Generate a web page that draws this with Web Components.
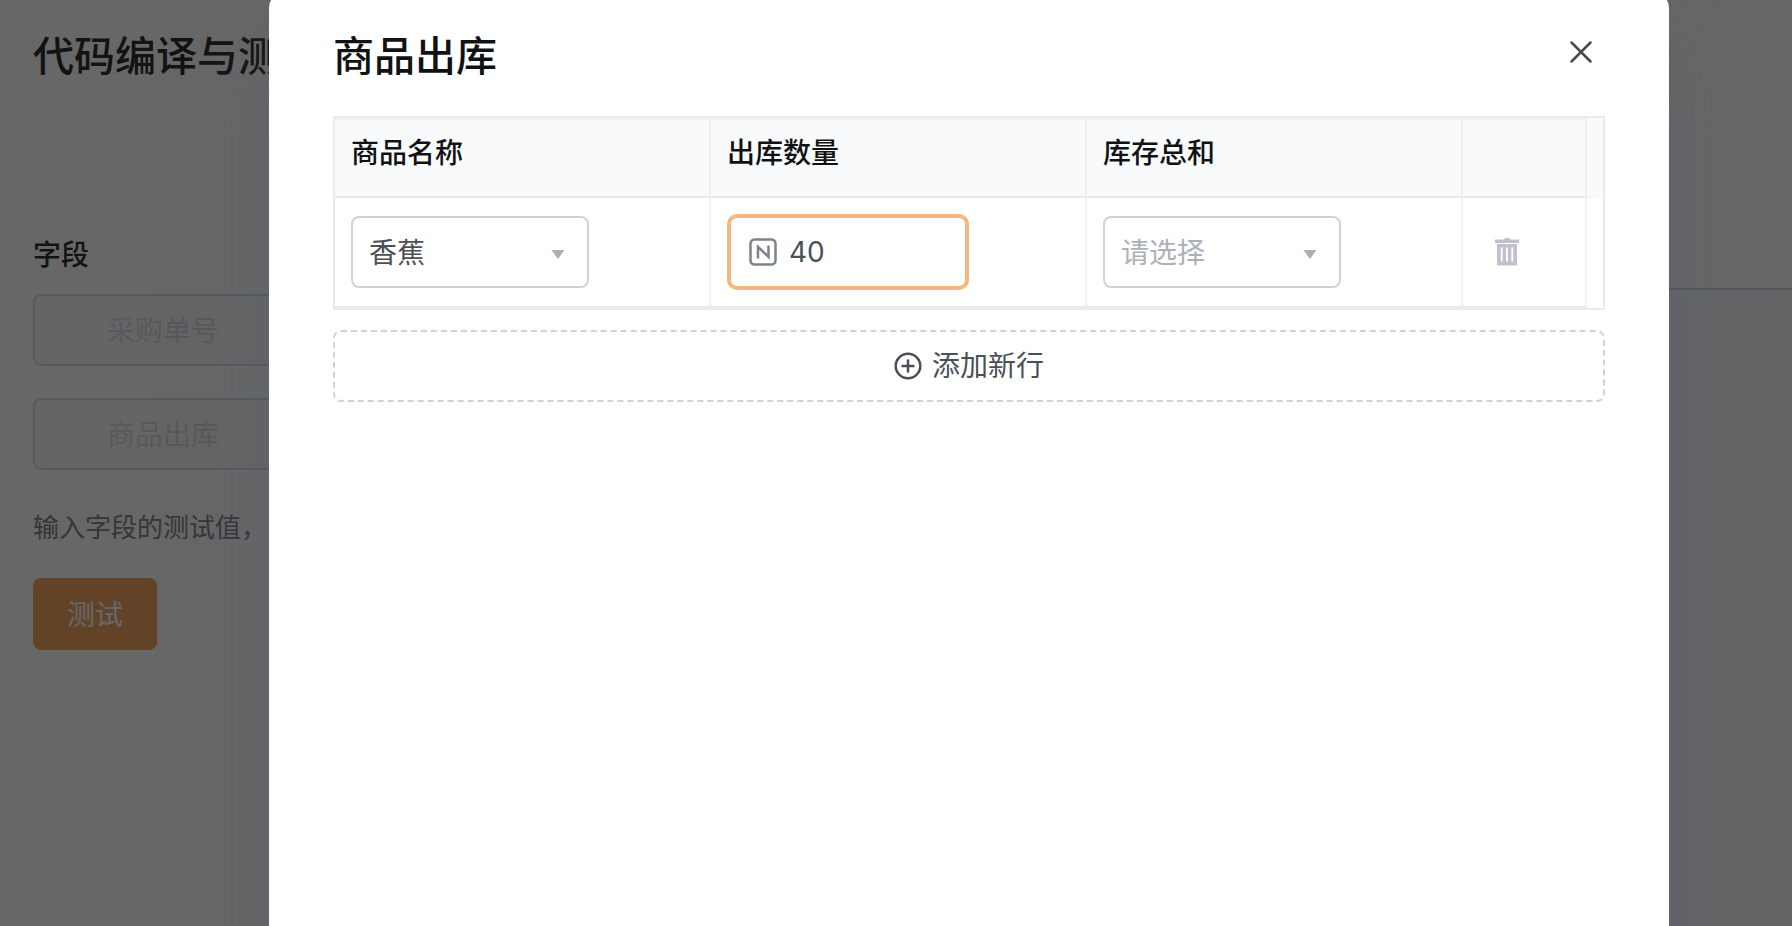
<!DOCTYPE html>
<html lang="zh-CN">
<head>
<meta charset="utf-8">
<title>商品出库</title>
<style>
    body {
        margin: 0;
        height: 100vh;
        overflow: hidden;
        font-family: Inter, 'Noto Sans CJK SC', sans-serif;
        font-size: 28px;
        line-height: 40px;
        color: #4b4f56;
        background: #fff;
    }
</style>
</head>
<body>
<test-page></test-page>
<modal-dialog heading="商品出库">
    <goods-table></goods-table>
    <add-row-button>添加新行</add-row-button>
</modal-dialog>
<script>
    class BaseElement extends HTMLElement {
        constructor() {
            super();
            this.root = this.attachShadow({ mode: 'open' });
        }
        connectedCallback() {
            this.root.innerHTML = this.render();
        }
    }

    // Disabled looking field with its placeholder
    class FieldInput extends BaseElement {
        render() {
            const label = this.getAttribute('label');
            return /*html*/`
                <style>
                    :host { display: block; }
                    input {
                        display: block;
                        box-sizing: border-box;
                        width: 100%;
                        height: 72px;
                        padding: 2px 72px 0;
                        border: 2px solid #d6deea;
                        border-radius: 8px;
                        background: #fafafa;
                        font: inherit;
                    }
                    input::placeholder { color: #dadce6; opacity: 1; }
                </style>
                <input type="text" placeholder="${label}" aria-label="${label}">
            `;
        }
    }
    customElements.define('field-input', FieldInput);

    // Page behind the dialog
    class TestPage extends BaseElement {
        render() {
            return /*html*/`
                <style>
                    :host {
                        display: grid;
                        grid-template-columns: 1fr 1fr;
                        height: 100vh;
                    }
                    section { padding: 28px 33px; }
                    h1 {
                        margin: 0;
                        font-size: 41px;
                        line-height: 56px;
                        font-weight: 500;
                        color: #2f3034;
                    }
                    h2 {
                        margin: 151px 0 19px;
                        font-size: 28px;
                        line-height: 40px;
                        font-weight: 500;
                        color: #2f3034;
                    }
                    .fields { display: grid; gap: 32px; }
                    p {
                        margin: 38px 0 30px;
                        font-size: 26px;
                        line-height: 40px;
                        color: #83868f;
                    }
                    button {
                        height: 72px;
                        padding: 2px 34px 0;
                        border: 0;
                        border-radius: 8px;
                        background: #f2a662;
                        color: #fff;
                        font: inherit;
                    }
                    .result {
                        margin-top: 288px;
                        border-top: 2px solid #cdd6ea;
                        background: #f9fafc;
                    }
                </style>
                <section>
                    <h1>代码编译与测试</h1>
                    <h2>字段</h2>
                    <div class="fields">
                        <field-input label="采购单号"></field-input>
                        <field-input label="商品出库"></field-input>
                    </div>
                    <p>输入字段的测试值，</p>
                    <button type="button">测试</button>
                </section>
                <div class="result"></div>
            `;
        }
    }
    customElements.define('test-page', TestPage);

    class ModalDialog extends BaseElement {
        render() {
            return /*html*/`
                <style>
                    :host {
                        position: absolute;
                        inset: 0;
                        display: flex;
                        justify-content: center;
                        box-sizing: border-box;
                        padding-left: 146px;
                        overflow: hidden;
                        background: rgba(0, 0, 0, 0.595);
                    }
                    .panel {
                        box-sizing: border-box;
                        width: 1400px;
                        max-width: 90%;
                        height: 120vh;
                        margin-top: -8px;
                        padding: 36px 64px;
                        border-radius: 16px;
                        background: #fff;
                        box-shadow: 0 24px 110px rgba(84, 90, 116, 0.25);
                    }
                    header {
                        display: flex;
                        justify-content: space-between;
                        align-items: flex-start;
                        margin-bottom: 32px;
                    }
                    h2 {
                        margin: 0;
                        font-size: 41px;
                        line-height: 56px;
                        font-weight: 500;
                        color: #111214;
                    }
                    button {
                        display: flex;
                        padding: 12px;
                        border: 0;
                        background: none;
                    }
                </style>
                <div class="panel" role="dialog" aria-label="${this.getAttribute('heading')}">
                    <header>
                        <h2>${this.getAttribute('heading')}</h2>
                        <button type="button" aria-label="关闭">
                            <svg width="24" height="24" fill="none" stroke="#454a52" stroke-width="2.5" stroke-linecap="round">
                                <path d="M2.5 2.5l19 19M21.5 2.5l-19 19"/>
                            </svg>
                        </button>
                    </header>
                    <slot></slot>
                </div>
            `;
        }
    }
    customElements.define('modal-dialog', ModalDialog);

    class SelectBox extends BaseElement {
        render() {
            const empty = this.hasAttribute('empty');
            return /*html*/`
                <style>
                    :host { display: grid; width: 238px; align-items: center; }
                    select, svg { grid-area: 1 / 1; }
                    select {
                        appearance: none;
                        box-sizing: border-box;
                        width: 100%;
                        height: 72px;
                        padding: 2px 16px 0;
                        border: 2px solid #cdd2e1;
                        border-radius: 8px;
                        background: #fff;
                        color: ${empty ? '#abb0ba' : '#4b4f56'};
                        font: inherit;
                    }
                    svg {
                        justify-self: end;
                        margin: 4px 24px 0 0;
                        pointer-events: none;
                    }
                </style>
                <select aria-label="${this.getAttribute('label')}">
                    <option>${this.getAttribute('value')}</option>
                </select>
                <svg width="14" height="9"><path d="M.5 0h13L7 9z" fill="#a9b0bc"/></svg>
            `;
        }
    }
    customElements.define('select-box', SelectBox);

    class NumberBox extends BaseElement {
        render() {
            return /*html*/`
                <style>
                    :host {
                        display: flex;
                        align-items: center;
                        gap: 12px;
                        box-sizing: border-box;
                        width: 242px;
                        height: 76px;
                        padding: 0 18px;
                        border: 4px solid #f5b780;
                        border-radius: 10px;
                        background: #fff;
                    }
                    svg { flex: none; }
                    input {
                        min-width: 0;
                        width: 100%;
                        padding: 0;
                        border: 0;
                        outline: 0;
                        background: none;
                        color: #4b4f56;
                        font: inherit;
                    }
                </style>
                <svg width="28" height="28" fill="none" stroke="#7b828c">
                    <rect x="1.5" y="1.5" width="25" height="25" rx="4" stroke-width="2.5"/>
                    <path d="M9 20.5V8.800l10.500 10V7.500" stroke-width="2.5"/>
                </svg>
                <input type="text" inputmode="numeric" value="${this.getAttribute('value')}" aria-label="${this.getAttribute('label')}">
            `;
        }
    }
    customElements.define('number-box', NumberBox);

    class GoodsTable extends BaseElement {
        render() {
            return /*html*/`
                <style>
                    :host {
                        display: block;
                        padding-right: 16px;
                        border: 2px solid #e7eaef;
                        background: linear-gradient(#fafafa 80px, #fff 80px);
                    }
                    table {
                        width: 100%;
                        table-layout: fixed;
                        border-collapse: separate;
                        border-spacing: 0;
                    }
                    .action { width: 124px; }
                    th, td {
                        box-sizing: border-box;
                        padding: 0 16px;
                        border-right: 2px solid #eef0f2;
                        border-bottom: 2px solid #e7eaef;
                        text-align: left;
                        background: #fff;
                    }
                    th {
                        height: 80px;
                        padding-bottom: 10px;
                        border-top: 2px solid #eff1f3;
                        background: #f9fafc;
                        font-weight: 500;
                        color: #111214;
                    }
                    td { height: 110px; }
                    td.action { padding: 0 28px; }
                    button {
                        display: flex;
                        padding: 0;
                        border: 0;
                        background: none;
                    }
                </style>
                <table>
                    <thead>
                        <tr>
                            <th>商品名称</th>
                            <th>出库数量</th>
                            <th>库存总和</th>
                            <th class="action"></th>
                        </tr>
                    </thead>
                    <tbody>
                        <tr>
                            <td><select-box label="商品名称" value="香蕉"></select-box></td>
                            <td><number-box label="出库数量" value="40"></number-box></td>
                            <td><select-box label="库存总和" value="请选择" empty></select-box></td>
                            <td class="action">
                                <button type="button" aria-label="删除">
                                    <svg width="32" height="32" fill="#c1c1cd">
                                        <path d="M4 3.500h8.500q1-1.800 3.500-1.800t3.500 1.800H28V7H4z"/>
                                        <path fill-rule="evenodd" d="M6 8h20v20.500q0 1-1 1H7q-1 0-1-1zM9.800 11.500v14h1.800v-14zM15.100 11.500v14h1.800v-14zM20.400 11.500v14h1.800v-14z"/>
                                    </svg>
                                </button>
                            </td>
                        </tr>
                    </tbody>
                </table>
            `;
        }
    }
    customElements.define('goods-table', GoodsTable);

    class AddRowButton extends BaseElement {
        render() {
            return /*html*/`
                <style>
                    :host { display: block; margin-top: 20px; }
                    button {
                        display: flex;
                        justify-content: center;
                        align-items: center;
                        gap: 10px;
                        box-sizing: border-box;
                        width: 100%;
                        height: 72px;
                        border: 2px dashed #cdd2e1;
                        border-radius: 8px;
                        background: none;
                        color: #4b4f56;
                        font: inherit;
                    }
                </style>
                <button type="button">
                    <svg width="28" height="28" fill="none" stroke="#4b4f56" stroke-width="2.5" stroke-linecap="round">
                        <circle cx="14" cy="14" r="12.3"/>
                        <path d="M14 8.5v11M8.5 14h11"/>
                    </svg>
                    <slot></slot>
                </button>
            `;
        }
    }
    customElements.define('add-row-button', AddRowButton);
</script>
</body>
</html>
